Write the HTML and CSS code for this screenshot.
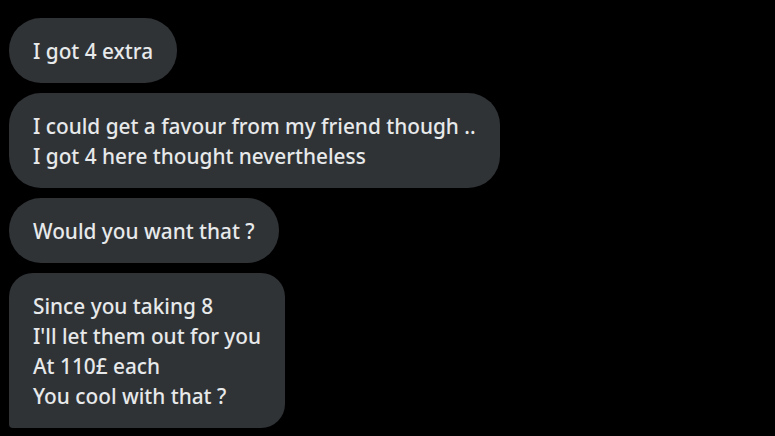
FILE: index.html
```html
<!DOCTYPE html>
<html>
<head>
<meta charset="utf-8">
<link rel="stylesheet" href="styles.css">
</head>
<body>
<div class="thread">
  <div class="bubble">I got 4 extra</div>
  <div class="bubble">I could get a favour from my friend though ..<br>I got 4 here thought nevertheless</div>
  <div class="bubble">Would you want that ?</div>
  <div class="bubble last">Since you taking 8<br>I'll let them out for you<br>At 110£ each<br>You cool with that ?</div>
</div>
</body>
</html>
```
FILE: styles.css
```css
html, body {
  margin: 0;
  background: #000;
}
body {
  width: 775px;
  height: 436px;
  overflow: hidden;
}
.thread {
  display: flex;
  flex-direction: column;
  align-items: flex-start;
  gap: 10px;
  padding: 18px 9px;
}
.bubble {
  background: #2f3336;
  color: #e7e9ea;
  font-family: "Noto Sans", sans-serif;
  font-size: 20.8px;
  font-weight: 500;
  line-height: 30px;
  padding: 17.5px 24px;
  border-radius: 32px;
  white-space: nowrap;
}
.bubble.last {
  border-radius: 24px 24px 24px 4px;
}
```
